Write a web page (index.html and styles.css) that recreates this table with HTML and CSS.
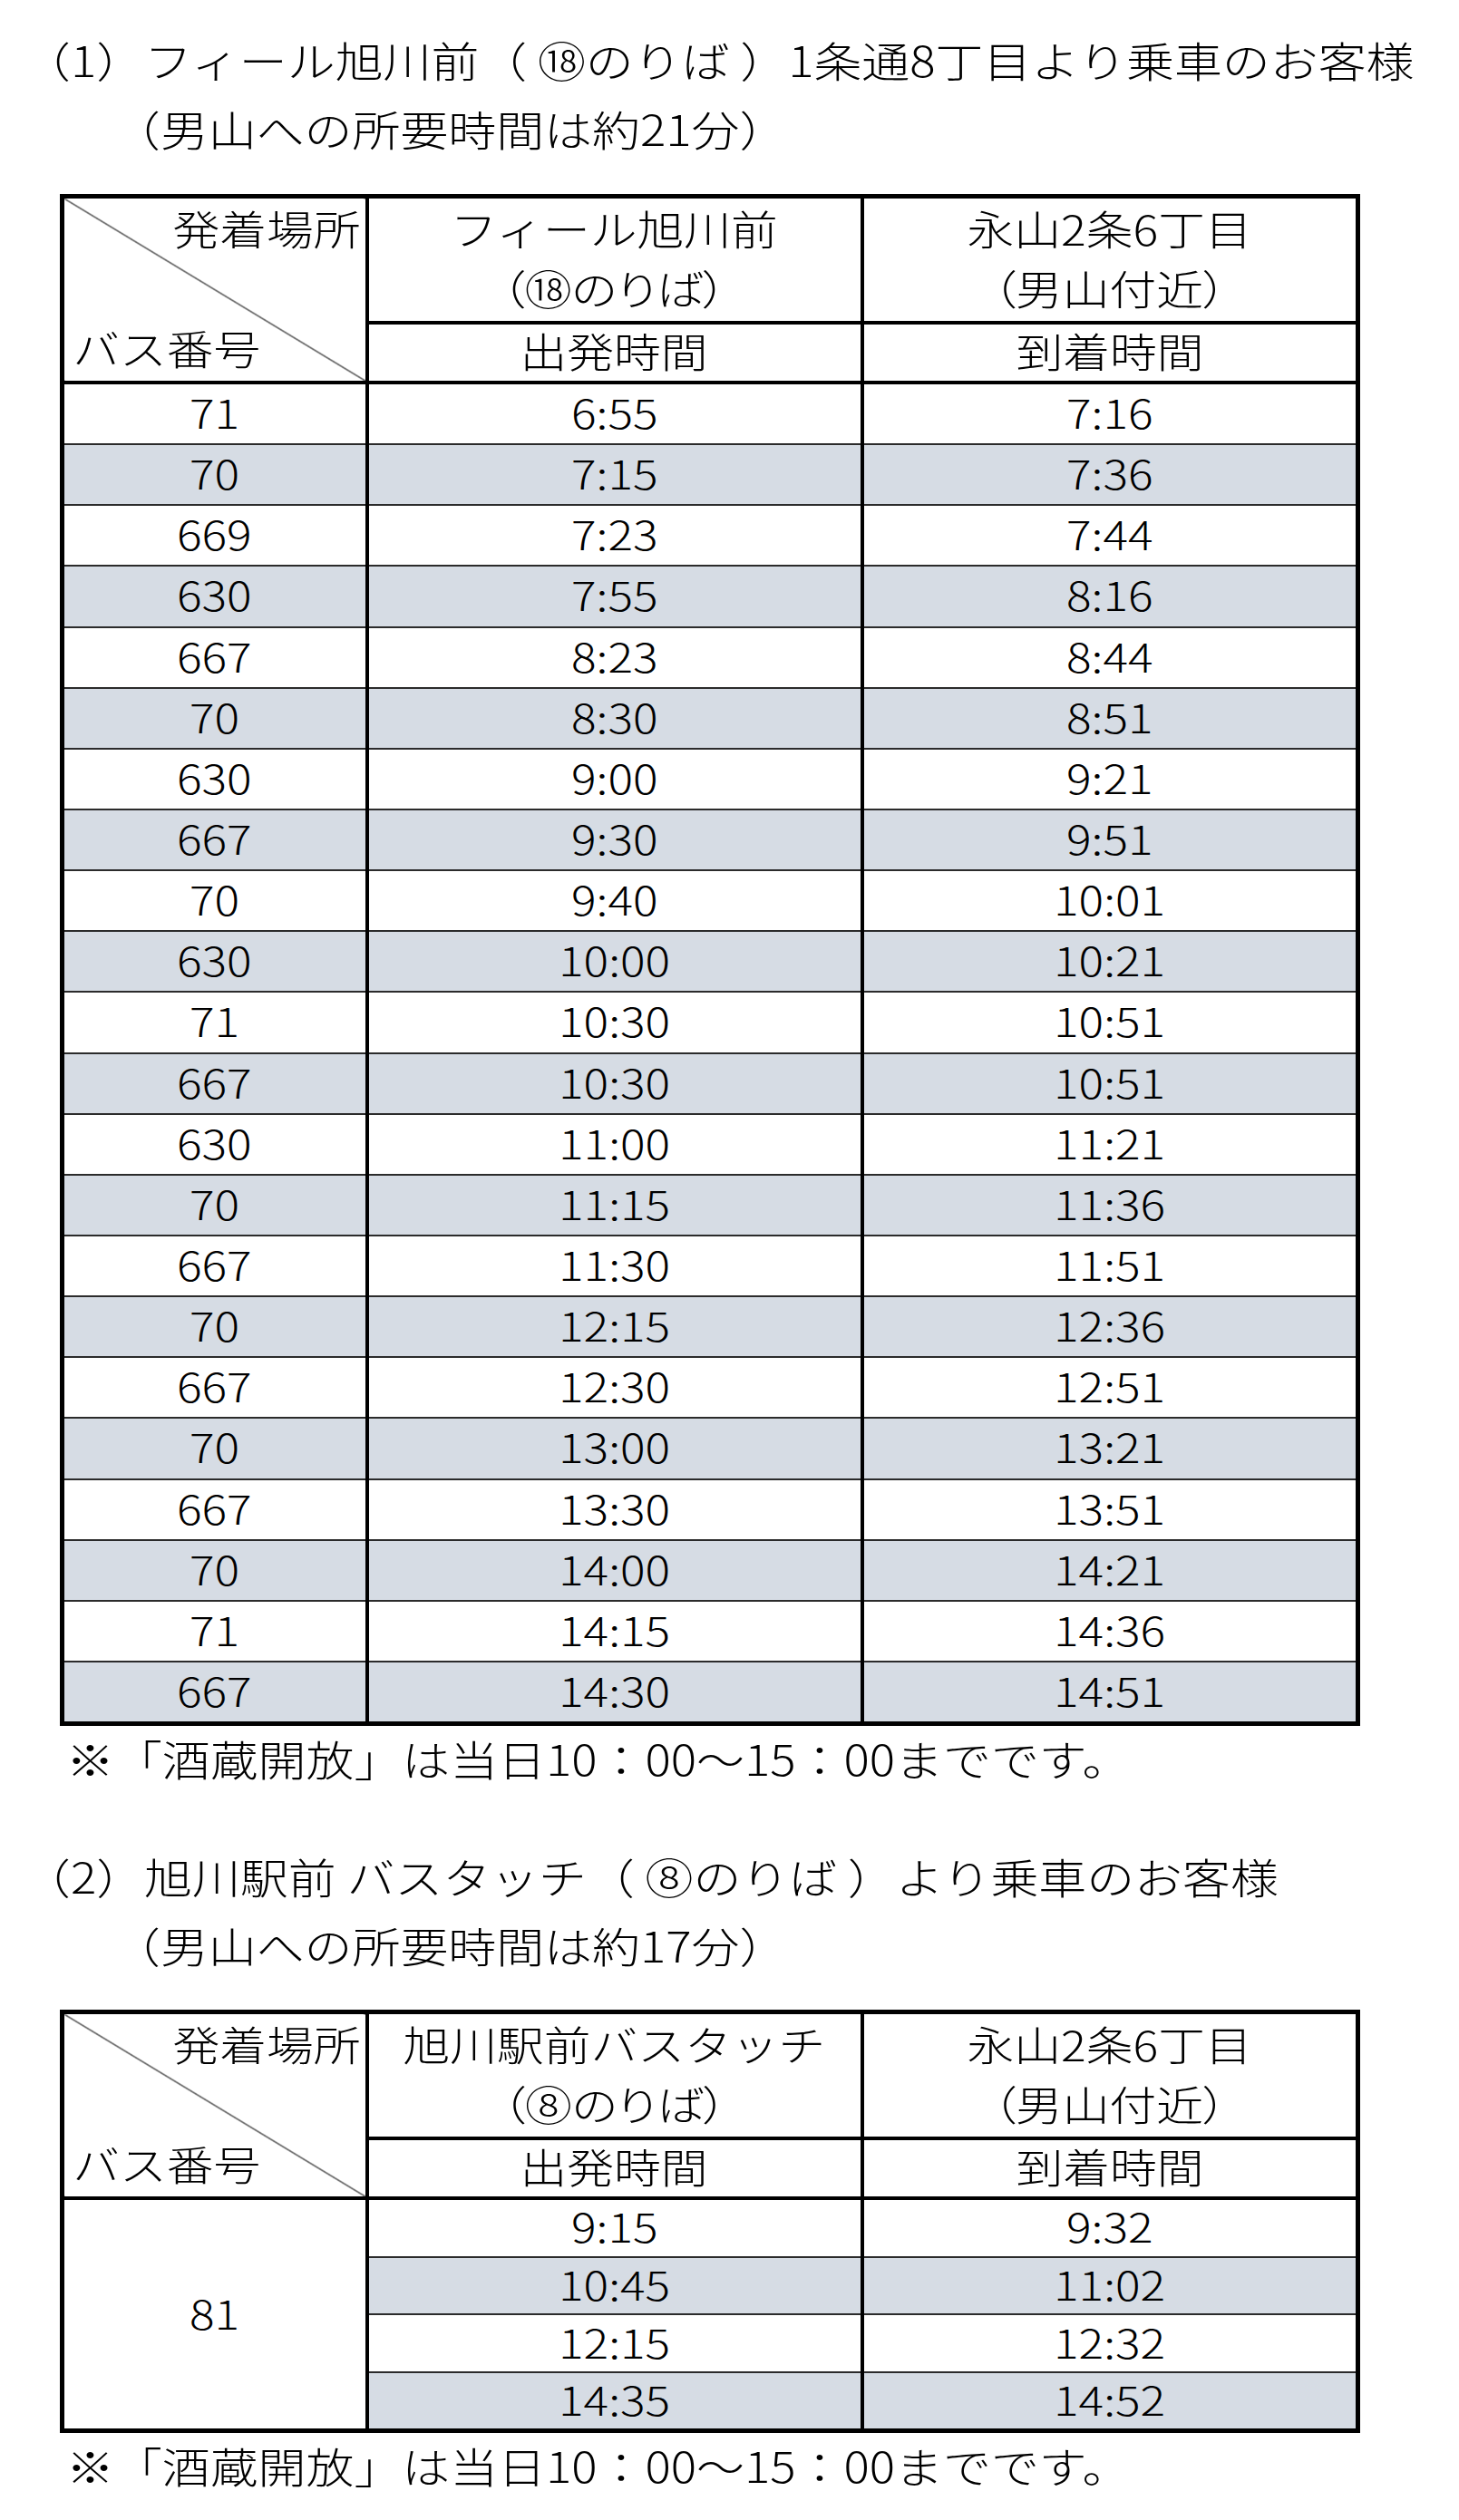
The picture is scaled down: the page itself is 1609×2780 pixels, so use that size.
FILE: index.html
```html
<!DOCTYPE html>
<html lang="ja">
<head>
<meta charset="utf-8">
<title>バス時刻表</title>
<link rel="stylesheet" href="styles.css">
</head>
<body>
<div class="page">
  <section class="route">
    <h2 class="heading">
      <span class="line">（1）フィール旭川前（ ⑱のりば ）1条通8丁目より乗車のお客様</span>
      <span class="line indent">（男山への所要時間は約21分）</span>
    </h2>
    <table class="timetable t1">
      <colgroup><col class="c1"><col class="c2"><col class="c3"></colgroup>
      <thead>
        <tr class="h1">
          <th class="corner" rowspan="2">
            <div class="corner-inner">
              <span class="corner-top">発着場所</span>
              <span class="corner-bottom">バス番号</span>
            </div>
          </th>
          <th class="place"><span class="t">フィール旭川前<br><span class="paren">（⑱のりば）</span></span></th>
          <th class="place"><span class="t">永山2条6丁目<br><span class="paren">（男山付近）</span></span></th>
        </tr>
        <tr class="h2">
          <th><span class="t">出発時間</span></th>
          <th><span class="t">到着時間</span></th>
        </tr>
      </thead>
      <tbody>
        <tr><td><span class="t">71</span></td><td><span class="t">6:55</span></td><td><span class="t">7:16</span></td></tr>
        <tr class="alt"><td><span class="t">70</span></td><td><span class="t">7:15</span></td><td><span class="t">7:36</span></td></tr>
        <tr><td><span class="t">669</span></td><td><span class="t">7:23</span></td><td><span class="t">7:44</span></td></tr>
        <tr class="alt"><td><span class="t">630</span></td><td><span class="t">7:55</span></td><td><span class="t">8:16</span></td></tr>
        <tr><td><span class="t">667</span></td><td><span class="t">8:23</span></td><td><span class="t">8:44</span></td></tr>
        <tr class="alt"><td><span class="t">70</span></td><td><span class="t">8:30</span></td><td><span class="t">8:51</span></td></tr>
        <tr><td><span class="t">630</span></td><td><span class="t">9:00</span></td><td><span class="t">9:21</span></td></tr>
        <tr class="alt"><td><span class="t">667</span></td><td><span class="t">9:30</span></td><td><span class="t">9:51</span></td></tr>
        <tr><td><span class="t">70</span></td><td><span class="t">9:40</span></td><td><span class="t">10:01</span></td></tr>
        <tr class="alt"><td><span class="t">630</span></td><td><span class="t">10:00</span></td><td><span class="t">10:21</span></td></tr>
        <tr><td><span class="t">71</span></td><td><span class="t">10:30</span></td><td><span class="t">10:51</span></td></tr>
        <tr class="alt"><td><span class="t">667</span></td><td><span class="t">10:30</span></td><td><span class="t">10:51</span></td></tr>
        <tr><td><span class="t">630</span></td><td><span class="t">11:00</span></td><td><span class="t">11:21</span></td></tr>
        <tr class="alt"><td><span class="t">70</span></td><td><span class="t">11:15</span></td><td><span class="t">11:36</span></td></tr>
        <tr><td><span class="t">667</span></td><td><span class="t">11:30</span></td><td><span class="t">11:51</span></td></tr>
        <tr class="alt"><td><span class="t">70</span></td><td><span class="t">12:15</span></td><td><span class="t">12:36</span></td></tr>
        <tr><td><span class="t">667</span></td><td><span class="t">12:30</span></td><td><span class="t">12:51</span></td></tr>
        <tr class="alt"><td><span class="t">70</span></td><td><span class="t">13:00</span></td><td><span class="t">13:21</span></td></tr>
        <tr><td><span class="t">667</span></td><td><span class="t">13:30</span></td><td><span class="t">13:51</span></td></tr>
        <tr class="alt"><td><span class="t">70</span></td><td><span class="t">14:00</span></td><td><span class="t">14:21</span></td></tr>
        <tr><td><span class="t">71</span></td><td><span class="t">14:15</span></td><td><span class="t">14:36</span></td></tr>
        <tr class="alt"><td><span class="t">667</span></td><td><span class="t">14:30</span></td><td><span class="t">14:51</span></td></tr>
      </tbody>
    </table>
    <p class="note">※「酒蔵開放」は当日10：00〜15：00までです。</p>
  </section>

  <section class="route second">
    <h2 class="heading">
      <span class="line">（2）旭川駅前 バスタッチ（ ⑧のりば ）より乗車のお客様</span>
      <span class="line indent">（男山への所要時間は約17分）</span>
    </h2>
    <table class="timetable t2">
      <colgroup><col class="c1"><col class="c2"><col class="c3"></colgroup>
      <thead>
        <tr class="h1">
          <th class="corner" rowspan="2">
            <div class="corner-inner">
              <span class="corner-top">発着場所</span>
              <span class="corner-bottom">バス番号</span>
            </div>
          </th>
          <th class="place"><span class="t">旭川駅前バスタッチ<br><span class="paren">（⑧のりば）</span></span></th>
          <th class="place"><span class="t">永山2条6丁目<br><span class="paren">（男山付近）</span></span></th>
        </tr>
        <tr class="h2">
          <th><span class="t">出発時間</span></th>
          <th><span class="t">到着時間</span></th>
        </tr>
      </thead>
      <tbody>
        <tr><td class="busno" rowspan="4"><span class="t">81</span></td><td><span class="t">9:15</span></td><td><span class="t">9:32</span></td></tr>
        <tr class="alt"><td><span class="t">10:45</span></td><td><span class="t">11:02</span></td></tr>
        <tr><td><span class="t">12:15</span></td><td><span class="t">12:32</span></td></tr>
        <tr class="alt"><td><span class="t">14:35</span></td><td><span class="t">14:52</span></td></tr>
      </tbody>
    </table>
    <p class="note">※「酒蔵開放」は当日10：00〜15：00までです。</p>
  </section>
</div>
</body>
</html>
```

FILE: styles.css
```css
html, body {
  margin: 0;
  padding: 0;
  background: #ffffff;
}

body {
  font-family: "Noto Sans CJK JP", "Noto Sans", sans-serif;
  color: #000000;
  font-size: 46px;
  font-weight: 300;
}

.page {
  padding: 27px 0 0 0;
  width: 1609px;
}

/* ---------- headings ---------- */
.heading {
  margin: 0;
  font-size: 46px;
  font-weight: 300;
  line-height: 76px;
  padding-left: 25px;
}

.heading .line {
  display: block;
  width: max-content;
  white-space: nowrap;
  transform: scaleX(1.15);
  transform-origin: left center;
}

.heading .indent {
  margin-left: 99px;
}

/* ---------- tables ---------- */
.timetable {
  margin: 35px 0 0 66px;
  border-collapse: collapse;
  width: 1429px;
  table-layout: fixed;
  border: 5px solid #000;
}

.c1 { width: 336px; }
.c2 { width: 546px; }
.c3 { width: 547px; }

.timetable th,
.timetable td {
  padding: 0;
  text-align: center;
  vertical-align: middle;
  font-weight: 300;
  line-height: 56px;
  border-left: 4px solid #000;
  border-right: 4px solid #000;
  white-space: nowrap;
}

.t {
  display: block;
  width: max-content;
  margin: 0 auto;
  transform: scaleX(1.15);
  transform-origin: center center;
  line-height: 56px;
  padding-bottom: 5px;
}

.timetable thead th {
  font-size: 45px;
  border-bottom: 4px solid #000;
}

.timetable .h1 th.place {
  height: 132px;
}

.timetable .h1 th.place .t {
  line-height: 66px;
  padding-bottom: 3px;
}

.timetable .h2 th {
  height: 62px;
  border-top: 4px solid #000;
}

.paren {
  font-feature-settings: "palt";
}

.timetable .corner {
  padding: 0;
  background: linear-gradient(to top right,
    transparent calc(50% - 1px),
    #000 50%,
    transparent calc(50% + 1px));
}

.corner-inner {
  display: flex;
  flex-direction: column;
  justify-content: space-between;
  height: 196px;
}

.corner-top {
  align-self: flex-end;
  padding-right: 4px;
  line-height: 60px;
  transform: scaleX(1.15);
  transform-origin: right center;
}

.corner-bottom {
  align-self: flex-start;
  padding-left: 8px;
  line-height: 64px;
  padding-bottom: 2px;
  transform: scaleX(1.15);
  transform-origin: left center;
}

.timetable tbody td {
  font-size: 44px;
  height: 65.15px;
  border-top: 2px solid #2b2b2b;
  border-bottom: 2px solid #2b2b2b;
}

.timetable tbody .t {
  transform: scaleX(1.17);
}

.timetable tbody tr:first-child td {
  border-top: 4px solid #000;
}

.timetable tbody tr:last-child td {
  border-bottom: 5px solid #000;
}

.timetable tbody tr.alt td {
  background: #d6dce4;
}

.t2 tbody td {
  height: 61.6px;
}

.t2 tbody td.busno {
  background: #ffffff;
  border-bottom: 5px solid #000;
}

/* ---------- notes ---------- */
.note {
  margin: -2px 0 0 73px;
  width: max-content;
  line-height: 75px;
  white-space: nowrap;
  transform: scaleX(1.15);
  transform-origin: left center;
}

.second {
  margin-top: 54px;
}

.second .timetable {
  margin-top: 34px;
}
```
